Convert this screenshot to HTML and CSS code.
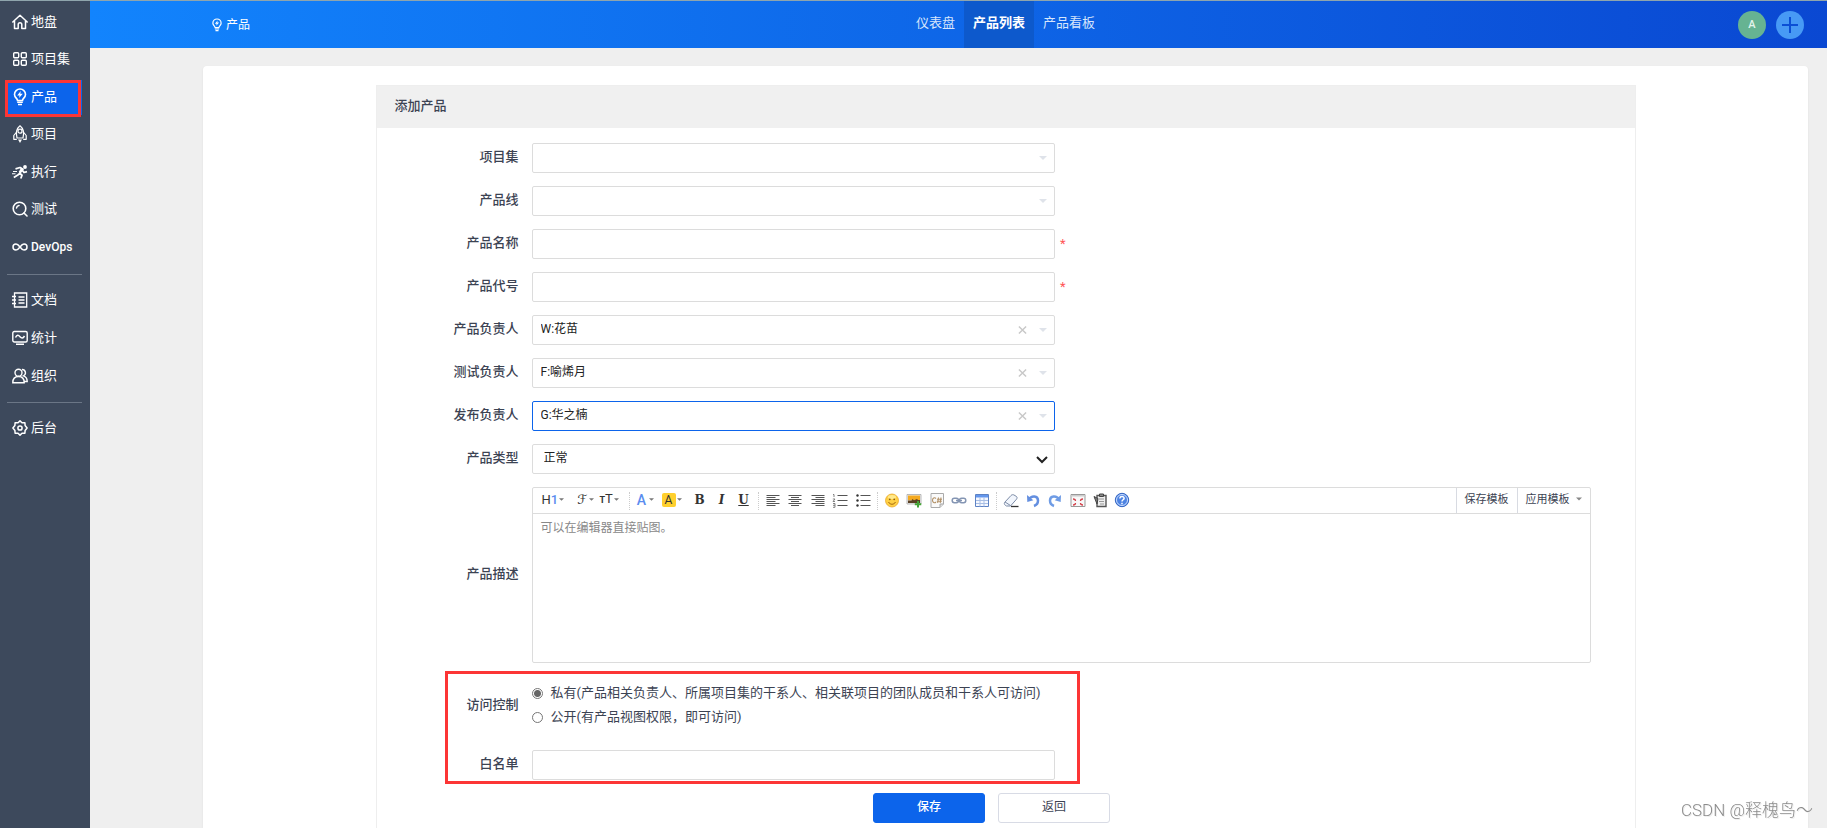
FILE: index.html
```html
<!DOCTYPE html>
<html lang="zh-CN">
<head>
<meta charset="utf-8">
<title>添加产品</title>
<link rel="stylesheet" href="styles.css">
</head>
<body>
<svg class="defs" aria-hidden="true">
  <symbol id="bulb" viewBox="0 0 16 18"><path d="M5.500 12.500C5.500 10.500 2.500 9.500 2.500 6.500a5.500 5.500 0 0 1 11 0c0 3-3 4-3 6z" fill="none" stroke="currentColor" stroke-width="1.600"/><path d="M8.800 3 5.200 7.400h2.400L7 10l3.800-4.300H8.300z" fill="currentColor"/><path d="M5.200 14.300h5.600M6 16.500h4" stroke="currentColor" stroke-width="1.600"/></symbol>
  <symbol id="caret" viewBox="0 0 8 4"><path d="M0 0h8L4 4z" fill="currentColor"/></symbol>
  <symbol id="cross" viewBox="0 0 10 10"><path d="m1 1 8 8M9 1 1 9" stroke="currentColor" stroke-width="1.600"/></symbol>
</svg>
<div class="app">
  <aside class="sidebar">
    <nav>
      <ul class="menu menu-main">
        <li><a href="#"><svg class="icon" viewBox="0 0 16 16"><path d="M.8 8 8 1.200 15.200 8M2.500 7v7.500h3.700v-4a1.800 1.800 0 0 1 3.600 0v4h3.700V7" fill="none" stroke="currentColor" stroke-width="1.500" stroke-linejoin="round" stroke-linecap="round"/></svg>地盘</a></li>
        <li><a href="#"><svg class="icon" viewBox="0 0 16 16"><g fill="none" stroke="currentColor" stroke-width="1.400"><rect x="1.700" y="1.700" width="5" height="5" rx="1"/><rect x="9.300" y="1.700" width="5" height="5" rx="1"/><rect x="1.700" y="9.300" width="5" height="5" rx="1"/><rect x="9.300" y="9.300" width="5" height="5" rx="1"/></g></svg>项目集</a></li>
        <li class="active"><a href="#"><svg class="icon tall"><use href="#bulb"/></svg>产品</a><span class="mark"></span></li>
        <li><a href="#"><svg class="icon tall" viewBox="0 0 16 18"><g fill="none" stroke="currentColor" stroke-width="1.200" stroke-linejoin="round"><path d="M5 13C3.500 7 5.200 3 8 .8c2.800 2.200 4.500 6.200 3 12.200z"/><path d="M4.200 7.500 1.800 10.500v3.800h3M11.800 7.500l2.400 3v3.800h-3"/><circle cx="8" cy="6.200" r="2"/></g><path d="M6 14.500h4L8 18z" fill="currentColor"/></svg>项目</a></li>
        <li><a href="#"><svg class="icon" viewBox="0 0 16 16"><circle cx="13" cy="3" r="1.900" fill="currentColor"/><path d="M3.500 4.800 8 3.500l3 1.700-3.300 4 2.300 2-1.200 3.300M8 9.200 5.800 11l-4 2.500M10.500 6.500l1.500 2 3-.8" fill="none" stroke="currentColor" stroke-width="1.800" stroke-linejoin="round"/><path d="m11 5-3.300 4-1-1 2.500-4.500z" fill="currentColor"/><path d="M1 7.500h4M0 9.800h3.500" stroke="currentColor" stroke-width="1.100"/></svg>执行</a></li>
        <li><a href="#"><svg class="icon" viewBox="0 0 16 16"><circle cx="7.500" cy="7.500" r="6.300" fill="none" stroke="currentColor" stroke-width="1.600"/><path d="m12 12 3 3M4.500 7a3 3 0 0 1 2.500-2.500" fill="none" stroke="currentColor" stroke-width="1.600" stroke-linecap="round"/></svg>测试</a></li>
        <li><a href="#" class="latin"><svg class="icon" viewBox="0 0 16 16"><path d="M8 8C6.500 6 5.500 5 4 5a3 3 0 0 0 0 6c1.500 0 2.500-1 4-3s2.500-3 4-3a3 3 0 0 1 0 6c-1.500 0-2.500-1-4-3z" fill="none" stroke="currentColor" stroke-width="1.500"/></svg>DevOps</a></li>
      </ul>
      <ul class="menu">
        <li><a href="#"><svg class="icon" viewBox="0 0 16 16"><path d="M3.200 1h11.500v14H2.500V1zM0 4.500h4M0 8h4M0 11.500h4M6.500 5h6M6.500 8h6M6.500 11h6" fill="none" stroke="currentColor" stroke-width="1.300"/></svg>文档</a></li>
        <li><a href="#"><svg class="icon" viewBox="0 0 16 16"><rect x=".8" y="1.500" width="14.400" height="10.500" rx="1.500" fill="none" stroke="currentColor" stroke-width="1.400"/><path d="M3.500 7.500c1.500-3 3-2.500 4.500-.8s3 1.800 4.500-.7M4 14.300h8" fill="none" stroke="currentColor" stroke-width="1.500"/></svg>统计</a></li>
        <li><a href="#"><svg class="icon" viewBox="0 0 16 16"><g fill="none" stroke="currentColor" stroke-width="1.400"><circle cx="6.500" cy="4.700" r="3.500"/><path d="M.8 14.700c0-4 2.200-6.200 5.700-6.200s5.700 2.200 5.700 6.200zM10 1.500a3.300 3.300 0 0 1 1.500 6.300c2.500.8 3.700 2.700 3.700 5.700h-2.500"/></g></svg>组织</a></li>
      </ul>
      <ul class="menu">
        <li><a href="#"><svg class="icon" viewBox="0 0 16 16"><path d="M8 .9 10 2.800l2.900-.1.200 2.800L15.100 8l-2 2.400-.2 2.900-2.900-.1L8 15.100l-2-1.900-2.900.1-.2-2.900L.9 8l2-2.500.2-2.800 2.900.1z" fill="none" stroke="currentColor" stroke-width="1.500" stroke-linejoin="round"/><circle cx="8" cy="8" r="2.100" fill="none" stroke="currentColor" stroke-width="1.500"/></svg>后台</a></li>
      </ul>
    </nav>
  </aside>
  <div class="page">
    <header class="topbar">
      <a class="brand" href="#"><svg class="brand-icon"><use href="#bulb"/></svg>产品</a>
      <nav class="tabs"><a href="#">仪表盘</a><a href="#" class="current">产品列表</a><a href="#">产品看板</a></nav>
      <div class="actions">
        <button type="button" class="avatar">A</button>
        <button type="button" class="add" aria-label="添加"><svg viewBox="0 0 28 28"><path d="M14 6v16M6 14h16" stroke="currentColor" stroke-width="2"/></svg></button>
      </div>
    </header>
    <main class="card">
      <section class="panel">
        <h1>添加产品</h1>
        <form>
          <div class="row"><label for="program">项目集</label><div class="field"><select id="program"><option></option></select><svg class="caret"><use href="#caret"/></svg></div></div>
          <div class="row"><label for="line">产品线</label><div class="field"><select id="line"><option></option></select><svg class="caret"><use href="#caret"/></svg></div></div>
          <div class="row"><label for="name">产品名称</label><div class="field"><input id="name" type="text"><span class="required">*</span></div></div>
          <div class="row"><label for="code">产品代号</label><div class="field"><input id="code" type="text"><span class="required">*</span></div></div>
          <div class="row"><label for="po">产品负责人</label><div class="field"><select id="po"><option>W:花苗</option></select><button type="button" class="clear" aria-label="清除"><svg><use href="#cross"/></svg></button><svg class="caret"><use href="#caret"/></svg></div></div>
          <div class="row"><label for="qd">测试负责人</label><div class="field"><select id="qd"><option>F:喻烯月</option></select><button type="button" class="clear" aria-label="清除"><svg><use href="#cross"/></svg></button><svg class="caret"><use href="#caret"/></svg></div></div>
          <div class="row"><label for="rd">发布负责人</label><div class="field"><select id="rd" class="focused"><option>G:华之楠</option></select><button type="button" class="clear" aria-label="清除"><svg><use href="#cross"/></svg></button><svg class="caret"><use href="#caret"/></svg></div></div>
          <div class="row"><label for="type">产品类型</label><div class="field"><select id="type" class="native"><option>正常</option></select><svg class="chevron" viewBox="0 0 12 8"><path d="m1 1 5 5 5-5" fill="none" stroke="currentColor" stroke-width="2"/></svg></div></div>
          <div class="row"><label for="desc">产品描述</label>
            <div class="editor">
              <div class="toolbar">
                <div class="group">
                  <button type="button" class="wide"><span>H<b class="blue">1</b></span><svg><use href="#caret"/></svg></button>
                  <button type="button" class="wide script"><span>ℱ</span><svg><use href="#caret"/></svg></button>
                  <button type="button" class="wide"><span><small>T</small>T</span><svg><use href="#caret"/></svg></button>
                </div>
                <div class="group">
                  <button type="button" class="fore"><span class="blue">A</span><svg><use href="#caret"/></svg></button>
                  <button type="button" class="back"><span>A</span><svg><use href="#caret"/></svg></button>
                  <button type="button" class="serif bold">B</button>
                  <button type="button" class="serif italic">I</button>
                  <button type="button" class="serif under">U</button>
                </div>
                <div class="group five">
                  <button type="button" aria-label="左对齐"><svg viewBox="0 0 16 16"><path d="M1.500 3.500h13M1.500 5.500h9M1.500 7.500h13M1.500 9.500h9M1.500 11.500h13M1.500 13.500h9" stroke="#555"/></svg></button>
                  <button type="button" aria-label="居中"><svg viewBox="0 0 16 16"><path d="M1.500 3.500h13M4 5.500h8M1.500 7.500h13M4 9.500h8M1.500 11.500h13M4 13.500h8" stroke="#555"/></svg></button>
                  <button type="button" aria-label="右对齐"><svg viewBox="0 0 16 16"><path d="M1.500 3.500h13M5.500 5.500h9M1.500 7.500h13M5.500 9.500h9M1.500 11.500h13M5.500 13.500h9" stroke="#555"/></svg></button>
                  <button type="button" aria-label="编号"><svg viewBox="0 0 16 16"><path d="M5.500 3.500h10M5.500 8.500h10M5.500 13.500h10" stroke="#555"/><path d="M1 2.500h1V5M.8 7H3L1 9.500h2M1 11.500h2v3.800H1M1 13.300h2" fill="none" stroke="#666" stroke-width=".8"/></svg></button>
                  <button type="button" aria-label="列表"><svg viewBox="0 0 16 16"><path d="M5.500 3.500h10M5.500 8.500h10M5.500 13.500h10" stroke="#555"/><g fill="#333"><circle cx="2.500" cy="3.500" r="1.200"/><circle cx="2.500" cy="8.500" r="1.200"/><circle cx="2.500" cy="13.500" r="1.200"/></g></svg></button>
                </div>
                <div class="group five">
                  <button type="button" aria-label="表情"><svg viewBox="0 0 16 16"><circle cx="8" cy="8.500" r="6.500" fill="#ffd044" stroke="#e9a82c" stroke-width=".8"/><ellipse cx="8" cy="5" rx="4" ry="2" fill="#ffe98d"/><path d="M4.500 10c1.500 3 5.500 3 7 0" fill="none" stroke="#a66a10"/><circle cx="5.800" cy="7.300" r=".9" fill="#8b5a10"/><circle cx="10.200" cy="7.300" r=".9" fill="#8b5a10"/></svg></button>
                  <button type="button" aria-label="图片"><svg viewBox="0 0 16 16"><path d="M1 2.500h14v9.500H1z" fill="#eee" stroke="#aaa" stroke-width=".8"/><path d="M2 3.500h12v4.800H2z" fill="#f4a91f"/><path d="M2 8.500h3.500l1-1.500L8 8.300l3-1.300 1 1h2v3H2z" fill="#5a4024"/><path d="M12 9v6.500M8.800 12.200h6.500" stroke="#43a336" stroke-width="2"/></svg></button>
                  <button type="button" aria-label="代码"><svg viewBox="0 0 16 16"><path d="M2 1.500h12.500V12L11 15.500H2z" fill="#fafafa" stroke="#aaa"/><path d="M14.500 12H11v3.500" fill="#ddd" stroke="#aaa"/><path d="M7 6.500C5.500 5 3.500 6 3.500 8.200S5.500 11.500 7 10M9.500 5.500l-.8 5.500M12 5.500l-.8 5.500M8 7.200h5M7.800 9.300h5" fill="none" stroke="#b39268" stroke-width="1.100"/></svg></button>
                  <button type="button" aria-label="链接"><svg viewBox="0 0 16 16"><g fill="none" stroke="#8495b3" stroke-width="1.500"><rect x="1.200" y="6.300" width="6.300" height="4.400" rx="2.200"/><rect x="8.500" y="6.300" width="6.300" height="4.400" rx="2.200"/><path d="M5 8.500h6"/></g></svg></button>
                  <button type="button" aria-label="表格"><svg viewBox="0 0 16 16"><path d="M1.500 2.500h13v12h-13z" fill="#f5f8ff" stroke="#5d82c4"/><path d="M2 3h12v2.500H2z" fill="#6497ed"/><path d="M2 8.500h12M2 11.500h12M6 5.500v9M10 5.500v9" stroke="#a9bfe5"/></svg></button>
                </div>
                <div class="group six">
                  <button type="button" aria-label="清除格式"><svg viewBox="0 0 16 16"><path d="M1.500 10.500 8 3.500c1-1 2-1 3-.5l2.500 1.500c1 1 .5 2 0 2.700L7.500 14H3.500c-2-1-2.500-2-2-3.500z" fill="#f2f6fd" stroke="#7b8aa5"/><path d="m2 10 5.500 3.500" stroke="#7b8aa5"/><path d="M8 14.500h7.500" stroke="#333" stroke-width="1.300"/></svg></button>
                  <button type="button" aria-label="撤销"><svg viewBox="0 0 16 16"><path d="M4 7.500c2.500-4.500 9-4 9 1 0 3-1.800 4.700-4 5.500" fill="none" stroke="#648fe0" stroke-width="2.500"/><path d="m2 3 .3 7 6-1.800z" fill="#648fe0"/></svg></button>
                  <button type="button" aria-label="重做"><svg viewBox="0 0 16 16"><path d="M12 7.500C9.500 3 3 3.500 3 8.500c0 3 1.800 4.700 4 5.500" fill="none" stroke="#6f9ce5" stroke-width="2.500"/><path d="m14 3-.3 7-6-1.800z" fill="#6f9ce5"/></svg></button>
                  <button type="button" aria-label="全屏"><svg viewBox="0 0 16 16"><path d="M1 2.500h14v12H1z" fill="#f8f8f8" stroke="#999"/><path d="M1.500 3h13v1.500h-13z" fill="#ccc"/><path d="M3 7c2 0 2.500.3 2.500 2M13 7c-2 0-2.500.3-2.500 2M3 13c2 0 2.500-.3 2.500-2M13 13c-2 0-2.500-.3-2.500-2" fill="none" stroke="#d4404a" stroke-width="1.300"/></svg></button>
                  <button type="button" aria-label="粘贴"><svg viewBox="0 0 16 16"><path d="M5 3.500h9v11H5z" fill="#eee" stroke="#555" stroke-width="1.400"/><path d="M7.500 2h4v2.500h-4z" fill="#888" stroke="#444"/><path d="M7 7h5M7 9.500h5M8 12h4" stroke="#999"/><path d="M2 4.500 5 12l1-5.500z" fill="#777" stroke="#444"/></svg></button>
                  <button type="button" aria-label="帮助"><svg viewBox="0 0 16 16"><circle cx="8" cy="8" r="6.700" fill="#4d83e2" stroke="#3566c2"/><circle cx="8" cy="8" r="5.500" fill="none" stroke="#c8dcff"/><path d="M5.900 6.500c0-3 4.400-2.600 4.200-.1C10 7.800 8 7.800 8 9.500M8 10.700v1.500" fill="none" stroke="#fff" stroke-width="1.500"/></svg></button>
                </div>
                <div class="templates"><button type="button">保存模板</button><button type="button">应用模板<svg><use href="#caret"/></svg></button></div>
              </div>
              <textarea id="desc" placeholder="可以在编辑器直接贴图。"></textarea>
            </div>
          </div>
          <div class="access">
            <div class="row"><span class="label" id="acl">访问控制</span>
              <div class="radios" role="radiogroup" aria-labelledby="acl">
                <label><input type="radio" name="acl" checked>私有(产品相关负责人、所属项目集的干系人、相关联项目的团队成员和干系人可访问)</label>
                <label><input type="radio" name="acl">公开(有产品视图权限，即可访问)</label>
              </div>
            </div>
            <div class="row"><label for="white">白名单</label><div class="field"><input id="white" type="text"></div></div>
            <span class="mark"></span>
          </div>
          <div class="buttons"><button type="submit" class="primary">保存</button><button type="button">返回</button></div>
        </form>
      </section>
    </main>
  </div>
</div>
<div class="watermark">CSDN @释槐鸟～</div>
</body>
</html>
```
FILE: styles.css
```css
* { box-sizing: border-box; }
body { margin: 0; font: 13px/20px Roboto, "Noto Sans CJK SC", sans-serif; color: #3c4353; background: #efefef; }
button, input, select, textarea { font: inherit; color: inherit; margin: 0; }
button { padding: 0; border: 0; background: none; cursor: pointer; }
a { color: inherit; text-decoration: none; }
.defs { position: absolute; width: 0; height: 0; }

.app { display: flex; min-height: 100vh; border-top: 1px solid #8fa5ad; }
.page { flex: 1; min-width: 0; display: flex; flex-direction: column; }

/* Side menu */
.sidebar { flex: 0 0 90px; padding: 4px 8px 0 7px; background: #3d495c; color: #fff; }
.menu { margin: 0; padding: 0; list-style: none; display: flex; flex-direction: column; }
.menu-main { height: 262px; }
.menu li { flex: 1 0 auto; display: flex; position: relative; }
.menu + .menu { margin-top: 7px; padding-top: 6px; border-top: 1px solid #6b7686; }
.menu a { flex: 1; height: 38px; padding: 0 0 1px 5px; display: flex; align-items: center; gap: 3px; white-space: nowrap; }
.menu-main a { height: 35px; }
.menu .latin { font-size: 12px; font-weight: 500; }
.icon { width: 16px; height: 16px; flex: none; }
.icon.tall { height: 18px; }
.menu .active a { background: #0c64eb; }
.mark { position: absolute; border: 3px solid #fc3535; pointer-events: none; }
.menu .mark { top: 0; bottom: 0; left: -2px; right: 1px; }

/* Header */
.topbar { height: 47px; padding: 0 23px 0 121px; display: grid; grid-template-columns: 1fr auto 1fr; align-items: center; color: #fff; background: linear-gradient(90deg, #1284fd, #0a48d2); }
.brand { display: flex; align-items: center; gap: 3px; font-size: 12px; }
.brand-icon { width: 12px; height: 14px; }
.tabs { display: flex; margin-right: 4px; }
.tabs a { padding: 0 9px; line-height: 44px; height: 47px; color: #d6e5fc; }
.tabs .current { background: #0d59cc; color: #fff; font-weight: 700; }
.actions { display: flex; justify-content: flex-end; gap: 10px; }
.avatar, .add { width: 28px; height: 28px; border-radius: 50%; }
.avatar { background: #66b392; color: #e3f3ec; font-size: 11px; font-weight: 500; }
.add { background: #479af5; color: #0b4fd5; }
.add svg { display: block; }

/* Card */
.card { flex: 1; margin: 18px 19px 0 113px; padding: 19px 20px 0; display: flex; justify-content: center; background: #fff; border-radius: 4px 4px 0 0; box-shadow: 0 1px 2px #ddd; }
.panel { flex: 0 1 1260px; border: 1px solid #eee; border-bottom: 0; }
.panel h1 { margin: 0; padding: 0 18px 2px; font-size: 13px; line-height: 40px; font-weight: 500; background: #f0f0f0; }
form { padding: 15px 44px 5px 0; display: grid; gap: 13px; }
.row { display: grid; grid-template-columns: 142px minmax(0, 1fr); column-gap: 13px; align-items: center; }
.row > label, .label { padding-bottom: 3px; text-align: right; font-weight: 500; }
.field { position: relative; width: calc(50% - 6px); display: flex; }
.field select, .field input { width: 100%; height: 30px; padding: 0 8px 2px; border: 1px solid #dcdcdc; border-radius: 2px; background: #fff; color: #222; font-size: 12px; appearance: none; outline: 0; }
.field .focused { border-color: #0c64eb; }
.field .native { padding-left: 11px; }
.caret { position: absolute; right: 8px; top: 13px; width: 8px; height: 4px; color: #dfe3ea; }
.chevron { position: absolute; right: 7px; top: 12px; width: 12px; height: 8px; color: #222; }
.clear { position: absolute; right: 28px; top: 10px; width: 9px; height: 10px; color: #c8c8c8; }
.clear svg { display: block; width: 9px; height: 10px; }
.required { position: absolute; left: 100%; top: 5px; margin-left: 5px; color: #f55; font-size: 13px; }

/* Rich text editor */
.editor { border: 1px solid #dcdcdc; border-radius: 2px; }
.toolbar { height: 26px; padding-left: 9px; display: flex; align-items: center; border-bottom: 1px solid #dcdcdc; }
.group { display: flex; justify-content: space-between; gap: 6px; align-items: center; padding-bottom: 2px; }
.group + .group { margin-left: 6px; padding-left: 6px; border-left: 1px dotted #ccc; }
.five { flex: 0 0 113px; gap: 0; }
.six { flex: 0 0 135px; gap: 0; }
.group button { width: 16px; height: 16px; line-height: 16px; display: flex; align-items: center; justify-content: center; color: #333; }
.group button > svg { width: 16px; height: 16px; flex: none; }
.group .wide, .group .fore, .group .back { justify-content: flex-start; gap: 1px; }
.group .wide { width: 23px; }
.group .fore { width: 20px; }
.group .back { width: 24px; }
.group .wide > svg, .group .fore > svg, .group .back > svg { width: 5px; height: 3px; color: #777; }
.group .script { justify-content: flex-end; font-family: "DejaVu Sans", sans-serif; }
.wide small { font-size: 9px; font-weight: 700; }
.blue { color: #5b8def; font-weight: 500; }
.fore span { width: 12px; font-size: 14px; text-align: center; }
.back span { width: 14px; height: 14px; line-height: 14px; border-radius: 2px; background: #ffd02e; font-size: 12px; text-align: center; }
.group .serif { font-family: "DejaVu Serif", serif; font-size: 12px; font-weight: 700; }
.italic { font-style: italic; }
.under { text-decoration: underline; }
.templates { margin-left: auto; align-self: stretch; display: flex; font-size: 11px; }
.templates button { border-left: 1px solid #d8dbe2; padding: 0 8px 1px; }
.templates svg { width: 6px; height: 4px; margin: 0 0 2px 6px; color: #888; }
.editor textarea { display: block; width: 100%; height: 148px; padding: 4px 8px; border: 0; resize: none; font-size: 12px; outline: 0; background: none; }
textarea::placeholder { color: #888; }

/* Access control */
.access { position: relative; display: grid; gap: 13px; }
.access .mark { left: 68px; top: -5px; bottom: -4px; width: 635px; }
.radios { padding: 5px 0 8px; }
.radios label { display: flex; align-items: center; height: 24px; gap: 8px; white-space: nowrap; }
.radios input { appearance: none; width: 11px; height: 11px; border: 1px solid #767676; border-radius: 50%; background: #fff; }
.radios input:checked { background: radial-gradient(circle, #666 3px, #fff 4px); }

.buttons { display: flex; justify-content: center; gap: 13px; padding-left: 16px; }
.buttons button { width: 112px; height: 30px; padding-bottom: 3px; border: 1px solid #d8dbe5; border-radius: 3px; font-size: 12px; }
.buttons .primary { border-color: #0c64eb; background: #0c64eb; color: #fff; font-weight: 500; }

.watermark { position: fixed; right: 14px; bottom: 6px; font-size: 17px; line-height: 24px; font-weight: 300; color: #8c8c8c; text-shadow: 1px 1px 0 #eee; pointer-events: none; }
```
